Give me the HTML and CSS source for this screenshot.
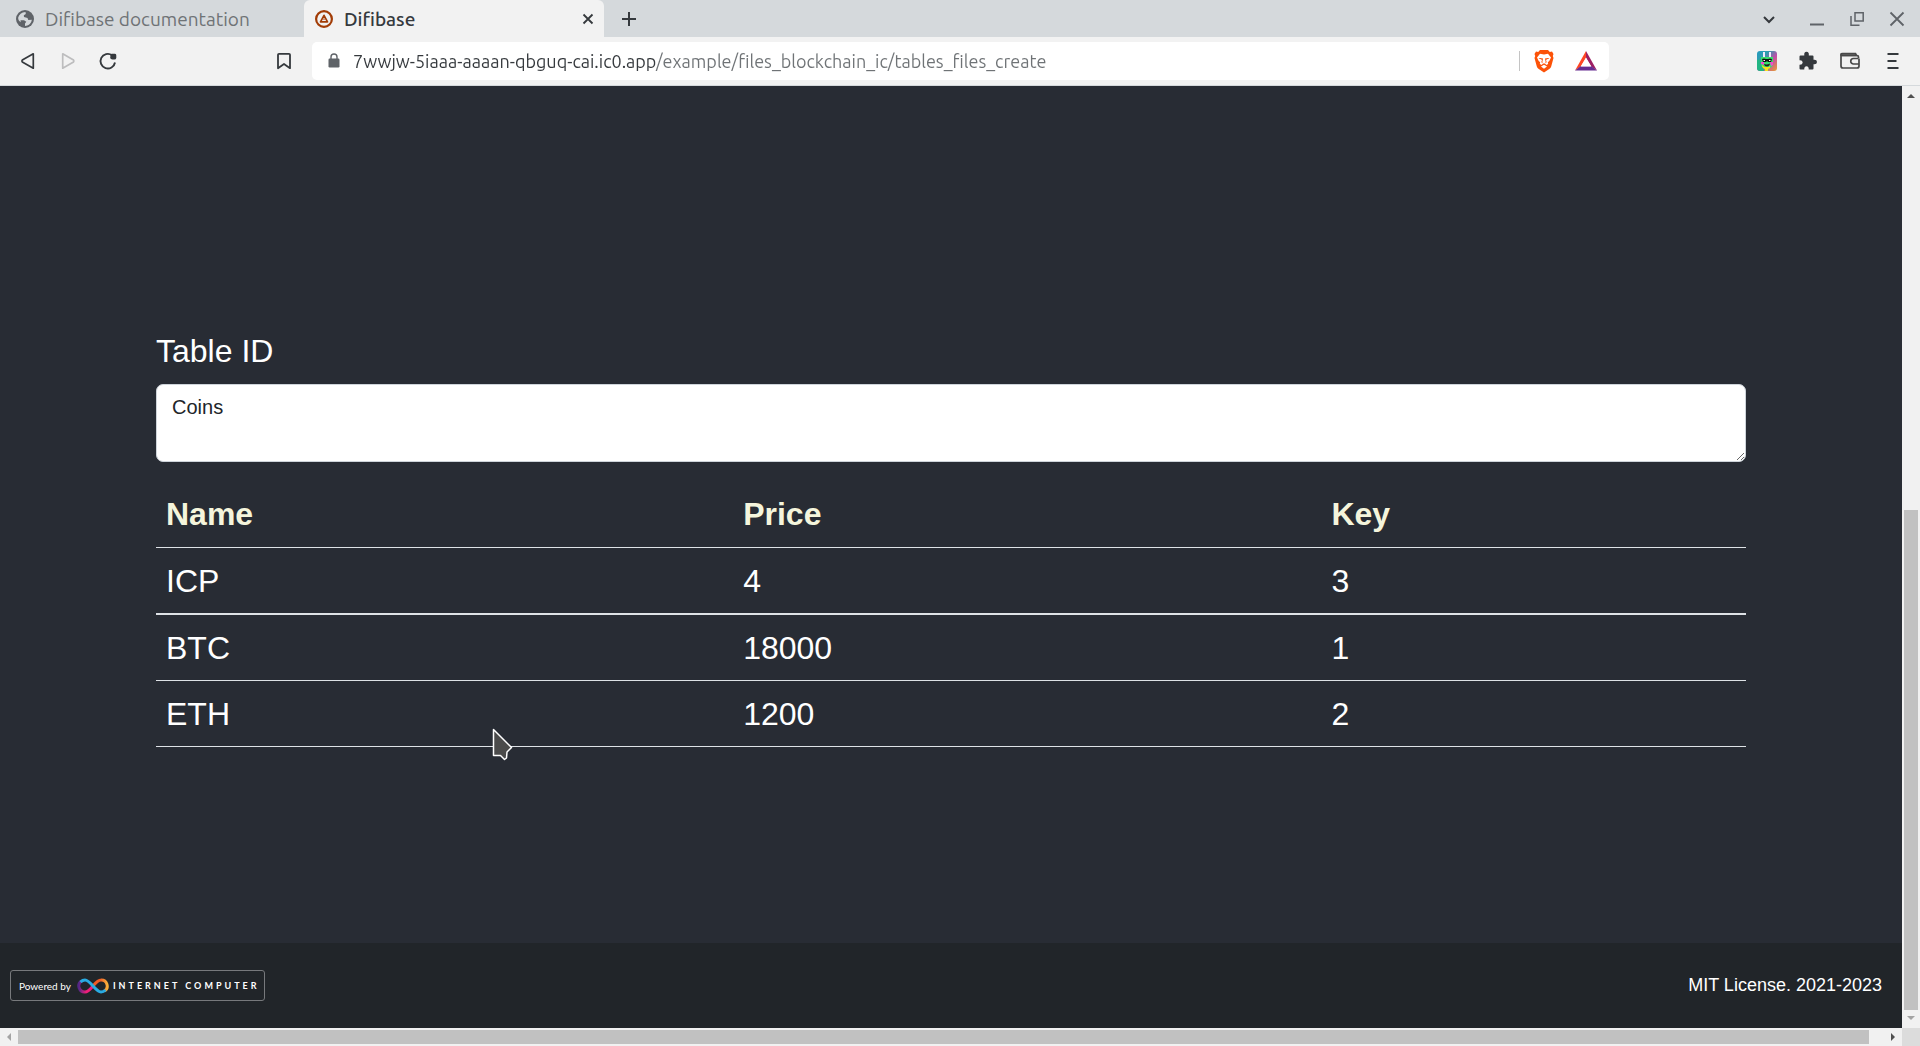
FILE: index.html
```html
<!DOCTYPE html>
<html lang="en">
<head>
<meta charset="utf-8">
<title>Difibase</title>
<link rel="stylesheet" href="styles.css">
</head>
<body>
<header class="browser">
  <div class="tab-strip">
    <button class="tab" type="button">
      <svg class="favicon" viewBox="0 0 18 18"><circle cx="9" cy="9" r="9" fill="#5f6368"/><path d="M2.2 7.5 C3 4.500 5.500 2.200 9.500 2 L9.800 4 L7.800 5.200 L8 7 L11.500 8 L12.300 10 L15.800 9.800 C15.500 13.500 12.300 16 9 16 L9 13.500 L10.300 11.800 L8 10.200 L4.500 10.200 L4.800 12.200 C3 11 2 9.500 2.200 7.500Z" fill="#d5d9dc"/></svg>
      <span>Difibase documentation</span>
    </button>
    <div class="tab tab-active">
      <svg class="favicon" viewBox="0 0 18 18" fill="none" stroke="#a23c06"><circle cx="9" cy="9" r="7.900" stroke-width="2.200"/><path d="M9 5.300 L12.500 11.800 H5.500Z" stroke-width="1.700" stroke-linejoin="round"/><path d="M9 8.500v1.500" stroke-width="1"/></svg>
      <span class="tab-title">Difibase</span>
      <button class="tab-close" type="button" aria-label="Close tab"><svg width="12" height="12" viewBox="0 0 12 12" stroke="#35393d" stroke-width="1.800"><path d="M1.500 1.500 10.500 10.500M10.500 1.500 1.500 10.500"/></svg></button>
    </div>
    <button class="new-tab" type="button" aria-label="New tab"><svg width="16" height="16" viewBox="0 0 16 16" stroke="#35393d" stroke-width="2"><path d="M8 1v14M1 8h14"/></svg></button>
    <div class="window-controls">
      <button type="button" aria-label="Search tabs"><svg width="16" height="16" viewBox="0 0 16 16" fill="none" stroke="#35393d" stroke-width="2"><path d="M3 6l5 5 5-5"/></svg></button>
      <button type="button" aria-label="Minimize"><svg width="16" height="16" viewBox="0 0 16 16"><path d="M1 12.500h14v2H1z" fill="#5f6368"/></svg></button>
      <button type="button" aria-label="Restore"><svg width="16" height="16" viewBox="0 0 16 16" fill="none" stroke="#5f6368" stroke-width="1.500"><path d="M6 1.800h8.200v8.200H6zM2 5v9.200h8.500"/></svg></button>
      <button type="button" aria-label="Close"><svg width="16" height="16" viewBox="0 0 16 16" stroke="#5f6368" stroke-width="1.800"><path d="M1.500 1.500l13 13M14.500 1.500l-13 13"/></svg></button>
    </div>
  </div>
  <div class="toolbar">
    <nav class="history">
      <button type="button" aria-label="Back"><svg width="20" height="20" viewBox="0 0 20 20" fill="none" stroke="#35393d" stroke-width="1.700" stroke-linejoin="round"><path d="M15.300 2.800v14.400L4.300 11Q3.500 10 4.300 9z"/></svg></button>
      <button type="button" aria-label="Forward"><svg width="20" height="20" viewBox="0 0 20 20" fill="none" stroke="#bdbdbe" stroke-width="1.700" stroke-linejoin="round"><path d="M4.700 2.800v14.400L15.500 11Q16.300 10 15.500 9z"/></svg></button>
      <button type="button" aria-label="Reload"><svg width="20" height="20" viewBox="0 0 20 20"><path d="M14 4.200A7.300 7.300 0 1 0 17 11.500" fill="none" stroke="#35393d" stroke-width="1.900"/><path d="M12.500 3.800q.2-1 1.500-1l3 0q1.400.2 1.300 1.600v2.500q-.3 1.500-2 1.500h-1.800q-2-.1-2.300-1.500z" fill="#35393d"/></svg></button>
    </nav>
    <button class="bookmark" type="button" aria-label="Bookmark"><svg width="16" height="20" viewBox="0 0 16 20" fill="none" stroke="#35393d" stroke-width="1.800" stroke-linejoin="round"><path d="M3 2.800h10q1 0 1 1v13.400l-6-4.200-6 4.200V3.800q0-1 1-1z"/></svg></button>
    <div class="address-bar">
      <svg class="lock" width="12" height="16" viewBox="0 0 12 16"><path d="M3 6V4a3 3 0 0 1 6 0v2" fill="none" stroke="#5f6368" stroke-width="1.400"/><rect x=".5" y="5.500" width="11" height="9" rx="1.200" fill="#5f6368"/></svg>
      <input class="url" type="text" aria-label="Address" spellcheck="false" value="7wwjw-5iaaa-aaaan-qbguq-cai.ic0.app/example/files_blockchain_ic/tables_files_create">
      <span class="divider"></span>
      <button type="button" aria-label="Shields"><svg width="20" height="24" viewBox="0 0 20 24"><path d="M6 1h8l1.800 2 2.200-.4 1.500 2.400-.7 2 .7 2-2.300 8.500q-.4 1.300-1.600 2.200L10 23.500l-5.600-3.800q-1.200-.9-1.600-2.200L.5 9l.7-2-.7-2L2 2.600l2.200.4z" fill="#fc5208"/><path d="M6 4.800 10 5.500l4-.7 3 3.700-1.700 3.500-1.500 1.300.4 1.500-1.500 1.200-1.700-1.300 1.800-1.800-.8-1.200.7-1.500 2.800-.5-1.500-.8-3 .6.600 3.200-.2 1.700H8.600l-.2-1.700L9 9.500l-3-.6-1.500.8 2.800.5.700 1.500-.8 1.200L9 14.700 7.300 16l-1.500-1.200.4-1.500L4.700 12 3 8.500zM7 17.500l3-1.700 3 1.700-3 2.300z" fill="#fff"/></svg></button>
      <button type="button" aria-label="Rewards"><svg width="22" height="20" viewBox="0 0 22 20"><path d="M11 0v7L5.500 15.800 0 19.500z" fill="#ff4724"/><path d="M11 0l11 19.500-5.500-3.700L11 7z" fill="#9e1f63"/><path d="M0 19.500l5.500-4.200h11l5.500 4.200z" fill="#662d91"/><path d="M11 6.500l5.200 9H5.800z" fill="#fff"/></svg></button>
    </div>
    <div class="extensions">
      <button type="button" aria-label="Wallet extension"><svg width="20" height="20" viewBox="0 0 20 20"><defs><linearGradient id="ext" x1="0" y1="0" x2="1" y2="1"><stop offset="0" stop-color="#249bc0"/><stop offset=".3" stop-color="#2f9cae"/><stop offset=".6" stop-color="#c14ca8"/><stop offset="1" stop-color="#e8a130"/></linearGradient></defs><rect width="20" height="20" rx="3" fill="url(#ext)"/><path d="M0 9l5-1 2 12H3q-3 0-3-3z" fill="#22b583"/><path d="M6 1h2v6H6zM12 1h2v6h-2z" fill="#f4eaff"/><path d="M4 6h12v7q0 3-4 4l-1 3H8l-1-3q-3-1-3-4z" fill="#38e06a"/><path d="M4 11l3 0v3l-3-1z" fill="#f04bd0"/><path d="M13 11h3v3l-2 1z" fill="#f04bd0"/><path d="M5 14q2 2 3 2h4l1-1v2l-2 1v2H8v-2q-3-1-3-4z" fill="#f8e21a"/><path d="M5 8q2-1 4 0l2 0q2-1 4 0l-1 3h-3l-1-1-1 1H6z" fill="#111"/><path d="M6.500 9h1.500v1H6.500zM12 9h1.500v1H12z" fill="#fff"/><path d="M7 13q3 1.200 6-.5-.5 3-3 3T7 13z" fill="#222"/></svg></button>
      <button type="button" aria-label="Extensions"><svg width="20" height="20" viewBox="0 0 20 20" fill="#35393d"><path d="M1.500 5.500q0-1 1-1H6.300Q5.800.9 8.500.8 11.300.9 10.800 4.500h3.700q1 0 1 1v3.300q3.400-.5 3.500 2.200-.1 2.700-3.500 2.200v4.300q0 1-1 1h-3.800q.3-3-2.200-3.200-2.500.2-2.200 3.200H2.500q-1 0-1-1v-3.800q3 .2 3.200-2.200-.2-2.500-3.200-2.200z"/></svg></button>
      <button type="button" aria-label="Wallet"><svg width="22" height="18" viewBox="0 0 22 18" fill="none" stroke="#494949" stroke-width="1.700"><path d="M19.500 6V5q0-1.500-1.500-1.500H3.500Q2 3.500 2 2.500V14q0 2 2 2h14q2 0 2-2v-2M19.500 6.500h-5a2.700 2.700 0 0 0 0 5.500h5.500V6.500"/><path d="M2 3V2.500q0-1 1.500-1h13l1 2H3z" fill="#6a6a6a"/></svg></button>
      <button type="button" aria-label="Menu"><svg width="12" height="18" viewBox="0 0 12 18" fill="#35393d"><path d="M.5 1h11v2H.500zM.5 8h9v2H.500zM.5 15h11v2H.500z"/></svg></button>
    </div>
  </div>
</header>
<div class="viewport">
  <div class="page">
    <main class="content">
      <div class="field">
        <label for="table-id">Table ID</label>
        <textarea id="table-id" spellcheck="false">Coins</textarea>
      </div>
      <table class="records">
        <colgroup><col class="col-name"><col class="col-price"><col class="col-key"></colgroup>
        <thead><tr><th scope="col">Name</th><th scope="col">Price</th><th scope="col">Key</th></tr></thead>
        <tbody>
          <tr><td>ICP</td><td>4</td><td>3</td></tr>
          <tr><td>BTC</td><td>18000</td><td>1</td></tr>
          <tr><td>ETH</td><td>1200</td><td>2</td></tr>
        </tbody>
      </table>
    </main>
    <footer class="footer">
      <a class="badge" href="#">
        <span class="badge-powered">Powered by</span>
        <svg width="32" height="16" viewBox="0 0 32 16" fill="none" stroke-width="3"><defs><linearGradient id="warm" x1="0" x2="1"><stop offset="0" stop-color="#f15a24"/><stop offset=".5" stop-color="#f15a24"/><stop offset="1" stop-color="#fbb03b"/></linearGradient><linearGradient id="pink" x1="0" x2="1"><stop offset="0" stop-color="#522785"/><stop offset=".5" stop-color="#ed1e79"/><stop offset="1" stop-color="#ed1e79"/></linearGradient></defs><path d="M15.500 8.500C19 4.500 21 2 24 2a6 6 0 0 1 3.500 11" stroke="url(#warm)"/><path d="M16.500 7.500C13 11.500 11 14 8 14A6 6 0 0 1 4.500 3" stroke="url(#pink)"/><path d="M3.500 4C5 2.500 6.500 2 8 2c5.500 0 10.500 12 16 12 1.500 0 3-.5 4.500-2" stroke="#29abe2"/></svg>
        <span class="badge-name">INTERNET COMPUTER</span>
      </a>
      <p class="license">MIT License. 2021-2023</p>
    </footer>
  </div>
  <div class="scrollbar scrollbar-y">
    <svg width="18" height="18" viewBox="0 0 18 18"><path d="M5 12l4-4 4 4z" fill="#505050"/></svg>
    <div class="track"><div class="thumb"></div></div>
    <svg width="18" height="18" viewBox="0 0 18 18"><path d="M5 6l4 4 4-4z" fill="#a3a3a3"/></svg>
  </div>
  <div class="scrollbar scrollbar-x">
    <svg width="18" height="18" viewBox="0 0 18 18"><path d="M11 5l-4 4 4 4z" fill="#a3a3a3"/></svg>
    <div class="track"><div class="thumb"></div></div>
    <svg width="18" height="18" viewBox="0 0 18 18"><path d="M7 5l4 4-4 4z" fill="#505050"/></svg>
  </div>
  <div class="corner"></div>
</div>
<svg class="pointer" width="22" height="34" viewBox="0 0 22 34"><path d="M1.500 1.500v26h7l4 4 2-1.500.5-6 4.500-4.500z" fill="#4b4b4b" stroke="#fff" stroke-width="1.500" stroke-linejoin="round"/></svg>
</body>
</html>
```
FILE: styles.css
```css
* { box-sizing: border-box; }

body {
  margin: 0;
  height: 100vh;
  display: flex;
  flex-direction: column;
  overflow: hidden;
  font-family: "Liberation Sans", Arial, sans-serif;
}

button {
  display: flex;
  align-items: center;
  justify-content: center;
  padding: 0;
  border: 0;
  background: none;
  font: inherit;
  color: inherit;
}

svg { display: block; flex: none; }

/* Browser frame */
.browser {
  font-family: Ubuntu, "Noto Sans", sans-serif;
  background: #f2f2f2;
  border-bottom: 1px solid #d5d9dc;
}

.tab-strip {
  display: flex;
  height: 37px;
  background: #d5d9dc;
}

.tab {
  display: flex;
  align-items: center;
  justify-content: flex-start;
  gap: 11px;
  width: 304px;
  padding: 0 16px;
  font-size: 19px;
  color: #6f7376;
}

.favicon { width: 18px; height: 18px; }

.tab-active {
  width: 300px;
  padding: 0 10px 0 11px;
  border-radius: 6px 6px 0 0;
  background: #f2f2f2;
  color: #35393d;
  font-weight: 500;
}

.tab-title { flex: 1; }

.new-tab { width: 50px; }

.window-controls {
  display: flex;
  gap: 24px;
  margin-left: auto;
  padding-right: 15px;
}

.window-controls button:first-child { margin-right: 8px; }

.toolbar {
  display: flex;
  align-items: center;
  height: 48px;
}

.history {
  display: flex;
  gap: 20px;
  padding-left: 18px;
}

.bookmark { margin: 0 20px 0 158px; }

.address-bar {
  display: flex;
  align-items: center;
  flex: 1;
  height: 38px;
  padding: 0 12px 0 16px;
  border-radius: 5px;
  background: #fff;
}

.address-bar button + button { margin-left: 21px; }

.url {
  flex: 1;
  min-width: 0;
  height: 30px;
  margin-left: 13px;
  padding: 0;
  border: 0;
  outline: 0;
  font: 18px Ubuntu, "Noto Sans", sans-serif;
  color: transparent;
  background: linear-gradient(90deg, #35393d 302px, #6f7376 302px);
  background-clip: text;
}

.divider {
  width: 1px;
  height: 20px;
  margin-right: 14px;
  background: #c4c4c4;
}

.extensions {
  display: flex;
  align-items: center;
  gap: 21px;
  padding: 0 21px 0 148px;
}

.extensions button:last-child { margin-left: 5px; }

/* Scrolling area */
.viewport {
  flex: 1;
  min-height: 0;
  display: grid;
  grid-template: minmax(0, 1fr) 18px / minmax(0, 1fr) 18px;
}

.page {
  display: flex;
  flex-direction: column;
  background: #282c34;
  color: #fff;
}

.scrollbar { display: flex; background: #f1f1f1; }
.scrollbar-y { flex-direction: column; }
.track { flex: 1; display: flex; }
.thumb { background: #c1c1c1; }
.scrollbar-y .track { padding: 0 2px; align-items: flex-end; }
.scrollbar-y .thumb { width: 100%; height: 55.2%; }
.scrollbar-x .track { padding: 2px 0; }
.scrollbar-x .thumb { width: 99.2%; }
.corner { background: #dcdcdc; }

/* Table viewer */
.content {
  flex: 1;
  padding: 241px 156px 0;
  font-size: 32px;
  line-height: 48px;
}

.field {
  display: flex;
  flex-direction: column;
  gap: 9px;
  margin-bottom: 19px;
}

.field textarea {
  height: 78px;
  padding: 7px 15px;
  border: 1px solid #ced4da;
  border-radius: 7px;
  outline: 0;
  font: 20px/30px "Liberation Sans", Arial, sans-serif;
  color: #212529;
  background: #fff;
  resize: vertical;
}

.records {
  width: 100%;
  table-layout: fixed;
  border-collapse: separate;
  border-spacing: 0;
  text-align: left;
}

.col-name { width: 36.3%; }
.col-price { width: 37%; }

.records th,
.records td {
  height: 66px;
  padding: 8px 10px;
  border-bottom: 1px solid #dee2e6;
}

.records th { height: 67px; color: #f5f5dc; }
.records tbody tr:first-child td { height: 67px; border-bottom-width: 2px; }

.footer {
  display: flex;
  align-items: center;
  justify-content: space-between;
  height: 85px;
  padding: 0 20px 0 10px;
  background: #212529;
  font-size: 18px;
}

.badge {
  display: flex;
  align-items: center;
  height: 31px;
  padding: 0 4px 0 8px;
  border: 1px solid #77797c;
  border-radius: 3px;
  font-family: Lato, sans-serif;
  color: #fff;
  text-decoration: none;
}

.badge-powered { margin-right: 6px; font-size: 10px; }
.badge-name { margin-left: 4px; font-size: 9px; font-weight: 700; letter-spacing: 3px; }
.license { margin: 0; }

.pointer {
  position: absolute;
  left: 492px;
  top: 728px;
  pointer-events: none;
}
```
